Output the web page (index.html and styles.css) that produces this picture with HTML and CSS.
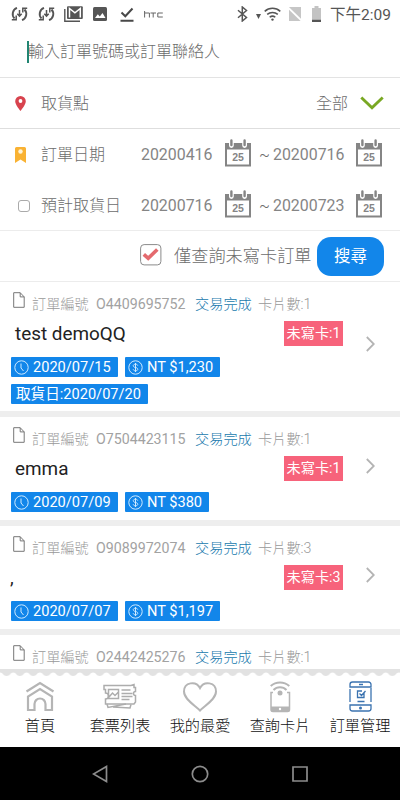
FILE: index.html
```html
<!DOCTYPE html>
<html lang="zh-Hant">
<head>
<meta charset="utf-8">
<meta name="viewport" content="width=device-width, initial-scale=1">
<title>訂單管理</title>
<link rel="stylesheet" href="styles.css">
</head>
<body>
<svg class="defs" width="0" height="0" aria-hidden="true">
  <symbol id="sync" viewBox="0 0 17 16"><g fill="none" stroke="#555" stroke-width="1.900"><path d="M6 1.800A6.600 6.600 0 0 0 3.500 12.500M11 14.200A6.600 6.600 0 0 0 13.500 3.500"/><path d="M.8 13.800h4.400V9.600M16.200 2.200h-4.400v4.200" stroke-width="1.500"/><path d="M8.500 4v6M6.300 7.800l2.200 2.400 2.200-2.400" stroke-width="1.500"/></g></symbol>
  <symbol id="calendar" viewBox="0 0 26 28"><path fill="#858585" d="M0 4h4v2.500a2.400 2.400 0 0 0 4.800 0V4h8.400v2.500a2.400 2.400 0 0 0 4.800 0V4h4v23.500H0zM2 10.500v15h22v-15z" fill-rule="evenodd"/><path d="M6.400 1.500v4.500M19.600 1.500v4.500" stroke="#858585" stroke-width="2.400" stroke-linecap="round"/></symbol>
  <symbol id="file" viewBox="0 0 12 16"><path d="M.7.7h6.500l4 4.200v10.400H.7zM7.200.7v4.200h4" fill="none" stroke="#777" stroke-width="1"/></symbol>
  <symbol id="clock" viewBox="0 0 15 15"><g fill="none" stroke="#cfeaff" stroke-width="1"><circle cx="7.500" cy="7.500" r="6.700"/><path d="M7 3.500v4.500l2.500 3"/></g></symbol>
  <symbol id="dollar" viewBox="0 0 15 15"><g fill="none" stroke="#cfeaff" stroke-width="1"><circle cx="7.500" cy="7.500" r="6.700"/><path d="M9.700 5.500C9.400 4.500 8.500 4.200 7.500 4.200c-3 0-3 3 0 3.300s3 3.300 0 3.300c-1.200 0-2-.4-2.300-1.400M7.500 3v9"/></g></symbol>
  <symbol id="chevron" viewBox="0 0 9 16"><path d="M.8 1l7 7-7 7" fill="none" stroke="#b4b4b4" stroke-width="1.800"/></symbol>
</svg>

<header class="status">
  <svg class="s-sync" width="17" height="16"><use href="#sync"/></svg>
  <svg class="s-sync2" width="17" height="16"><use href="#sync"/></svg>
  <svg class="s-mail" width="19" height="16" viewBox="0 0 19 16"><path d="M.8 3v12.200H16" fill="none" stroke="#555" stroke-width="1.400"/><rect x="3" y=".3" width="15.800" height="12.700" rx="1" fill="#555"/><path d="M5.500 11.500V2.500l5.400 4.300 5.400-4.300v9" fill="none" stroke="#fff" stroke-width="1.500"/></svg>
  <svg class="s-photo" width="14" height="14" viewBox="0 0 14 14"><rect width="14" height="14" rx="1.500" fill="#555"/><path d="M2 11l2.800-3.700 2 2.300L9.500 6l3 5z" fill="#fff"/></svg>
  <svg class="s-done" width="14" height="15" viewBox="0 0 14 15"><path d="M1.500 5.500l3.800 3.800L12.500 1.500M.5 13.700h13" fill="none" stroke="#484848" stroke-width="2"/></svg>
  <svg class="s-htc" width="19" height="7" viewBox="0 0 19 7"><path d="M.6 0v6.500M.6 2h4.800v4.500M6.500 2h5.500M9.200 2v4.500M18.800 2h-5v4h5" fill="none" stroke="#666" stroke-width="1"/></svg>
  <svg class="s-bt" width="11" height="16" viewBox="0 0 11 16"><path d="M1 4.200l8.500 7.300-4.200 3.500V1l4.200 3.500L1 11.800" fill="none" stroke="#555" stroke-width="1.500"/></svg>
  <svg class="s-tri" width="5" height="5" viewBox="0 0 5 5"><path d="M0 0h5L2.500 5z" fill="#555"/></svg>
  <svg class="s-wifi" width="17" height="14" viewBox="0 0 17 14"><path d="M.7 4.400a11.500 11.500 0 0 1 15.600 0M3.200 7.400a8 8 0 0 1 10.600 0M5.700 10.300a4.300 4.300 0 0 1 5.600 0" fill="none" stroke="#555" stroke-width="1.500"/><circle cx="8.500" cy="12.600" r="1.200" fill="#555"/></svg>
  <svg class="s-sim" width="14" height="16" viewBox="0 0 14 16"><path d="M1 1h12v14H1z" fill="#c6c6c6"/><path d="M0 1.500l13.500 13" stroke="#fff" stroke-width="1.800"/></svg>
  <svg class="s-batt" width="9" height="16" viewBox="0 0 9 16"><path d="M0 2h2.500V0h4v2H9v11H0z" fill="#c3c3c3"/><path d="M0 13.500h9V16H0z" fill="#555"/></svg>
  <span class="time">下午2:09</span>
</header>

<div class="query"><span class="caret"></span><span>輸入訂單號碼或訂單聯絡人</span></div>

<div class="row place">
  <svg class="lead" width="11" height="15" viewBox="0 0 11 15"><path d="M5.500 0A5.300 5.300 0 0 0 .2 5.300C.2 9 5.500 15 5.500 15s5.300-6 5.300-9.700A5.300 5.300 0 0 0 5.500 0z" fill="#d8434e"/><circle cx="5.500" cy="5" r="1.900" fill="#fff"/></svg>
  <span class="label">取貨點</span><span class="all">全部</span>
  <svg class="down" width="24" height="14" viewBox="0 0 24 14"><path d="M1.300 1.500L12 11.800 22.700 1.500" fill="none" stroke="#79a823" stroke-width="2.900"/></svg>
</div>

<section class="dates">
  <div class="row">
    <svg class="lead" width="11" height="16" viewBox="0 0 11 16"><path d="M1.500 0h8a1.500 1.500 0 0 1 1.500 1.500V16l-5.500-3.500L0 16V1.500A1.500 1.500 0 0 1 1.500 0z" fill="#f9b233"/><circle cx="5.500" cy="4.500" r="2.200" fill="#fff3d6"/></svg>
    <span class="label">訂單日期</span><span class="date">20200416</span><svg class="cal" width="26" height="28"><use href="#calendar"/><text x="13" y="21.700" text-anchor="middle" class="cal-day">25</text></svg><span class="tilde">~</span><span class="date-end">20200716</span><svg class="cal" width="26" height="28"><use href="#calendar"/><text x="13" y="21.700" text-anchor="middle" class="cal-day">25</text></svg>
  </div>
  <div class="row">
    <span class="lead check"></span>
    <span class="label">預計取貨日</span><span class="date">20200716</span><svg class="cal" width="26" height="28"><use href="#calendar"/><text x="13" y="21.700" text-anchor="middle" class="cal-day">25</text></svg><span class="tilde">~</span><span class="date-end">20200723</span><svg class="cal" width="26" height="28"><use href="#calendar"/><text x="13" y="21.700" text-anchor="middle" class="cal-day">25</text></svg>
  </div>
</section>

<div class="search">
  <svg width="22" height="22" viewBox="0 0 22 22"><rect x=".6" y=".6" width="20.300" height="20.300" rx="3.500" fill="#fff" stroke="#8a8a8a"/><path d="M3.800 10.300l4.400 4L17.300 5.500" fill="none" stroke="#e46a6e" stroke-width="3.600"/></svg>
  <span class="only">僅查詢未寫卡訂單</span><button class="go">搜尋</button>
</div>

<main class="orders">
  <article class="card tall">
    <div class="body">
      <div class="meta"><svg width="12" height="16"><use href="#file"/></svg><span class="k">訂單編號</span><span class="no">O4409695752</span><span class="state">交易完成</span><span class="count">卡片數:1</span></div>
      <div class="who"><span class="name">test demoQQ</span><span class="unwritten">未寫卡:1</span></div>
      <div class="tags"><span class="tag when"><svg width="15" height="15"><use href="#clock"/></svg>2020/07/15</span><span class="tag"><svg width="15" height="15"><use href="#dollar"/></svg>NT $1,230</span><span class="tag pick">取貨日:2020/07/20</span></div>
    </div>
    <svg class="more" width="9" height="16"><use href="#chevron"/></svg>
  </article>
  <article class="card">
    <div class="body">
      <div class="meta"><svg width="12" height="16"><use href="#file"/></svg><span class="k">訂單編號</span><span class="no">O7504423115</span><span class="state">交易完成</span><span class="count">卡片數:1</span></div>
      <div class="who"><span class="name">emma</span><span class="unwritten">未寫卡:1</span></div>
      <div class="tags"><span class="tag when"><svg width="15" height="15"><use href="#clock"/></svg>2020/07/09</span><span class="tag"><svg width="15" height="15"><use href="#dollar"/></svg>NT $380</span></div>
    </div>
    <svg class="more" width="9" height="16"><use href="#chevron"/></svg>
  </article>
  <article class="card">
    <div class="body">
      <div class="meta"><svg width="12" height="16"><use href="#file"/></svg><span class="k">訂單編號</span><span class="no">O9089972074</span><span class="state">交易完成</span><span class="count">卡片數:3</span></div>
      <div class="who"><span class="name comma">,</span><span class="unwritten">未寫卡:3</span></div>
      <div class="tags"><span class="tag when"><svg width="15" height="15"><use href="#clock"/></svg>2020/07/07</span><span class="tag"><svg width="15" height="15"><use href="#dollar"/></svg>NT $1,197</span></div>
    </div>
    <svg class="more" width="9" height="16"><use href="#chevron"/></svg>
  </article>
  <article class="card last">
    <div class="body">
      <div class="meta"><svg width="12" height="16"><use href="#file"/></svg><span class="k">訂單編號</span><span class="no">O2442425276</span><span class="state">交易完成</span><span class="count">卡片數:1</span></div>
    </div>
  </article>
</main>

<nav class="tabs">
  <svg class="edge" width="400" height="8"><defs><pattern id="scallop" width="13.300" height="8" patternUnits="userSpaceOnUse"><path d="M0 0h13.300v3.500C10.500 3.500 10 7 6.650 7S2.800 3.500 0 3.500z" fill="#e2e2e2"/></pattern></defs><rect width="400" height="8" fill="url(#scallop)"/></svg>
  <div class="tab"><svg width="36" height="32" viewBox="0 0 36 32"><g fill="none" stroke="#b5b5b5" stroke-width="2.200"><path d="M4.500 10.500L18 2l13.500 8.500"/><path d="M6 29V15.500L18 8l12 7.500V29h-6.500v-6a5.500 5.500 0 0 0-11 0v6z"/></g></svg><span>首頁</span></div>
  <div class="tab"><svg width="36" height="32" viewBox="0 0 36 32"><g fill="none" stroke="#adadad" stroke-width="1.500"><path d="M2 4.500h27l3-1v3h1.500v4a2 2 0 0 0 0 4V21l-1.500 2H3.500v-5a2 2 0 0 0 0-6V8.500H2z"/><path d="M5 23l1 3.500 18-3.500M11 26l17 1 1-3.500"/><path d="M6.500 8.500h10v9h-10zM7 16l3.500-4 2.500 2.500 3-3M19.500 9h9M19.500 12.500h11M19.500 15.500h11M19.500 18.500h8"/></g></svg><span>套票列表</span></div>
  <div class="tab"><svg width="36" height="32" viewBox="0 0 36 32"><path d="M18 29.500C14 25 2 18.500 2 10.500 2 1 14-.5 18 7c4-7.500 16-6 16 3.500 0 8-12 14.500-16 19z" fill="none" stroke="#b5b5b5" stroke-width="2"/></svg><span>我的最愛</span></div>
  <div class="tab"><svg width="36" height="32" viewBox="0 0 36 32"><path d="M11 11.500H9v17a2 2 0 0 0 2 2h14.500a2 2 0 0 0 2-2v-17H25" fill="none" stroke="#b5b5b5" stroke-width="1.500"/><path d="M9 25.500h18.500v5H9z" fill="#b5b5b5"/><circle cx="18" cy="28" r="1.200" fill="#fff"/><g fill="none" stroke="#b5b5b5" stroke-width="2"><path d="M8.700 5a14 14 0 0 1 18.600 0M11.500 9a9 9 0 0 1 13 0"/></g><circle cx="18" cy="12" r="2.500" fill="#b5b5b5"/></svg><span>查詢卡片</span></div>
  <div class="tab"><svg width="36" height="32" viewBox="0 0 36 32"><g fill="none" stroke="#3b73b0" stroke-width="1.300"><path d="M29 7v14M8 8v13M8 6V3.500A2.500 2.500 0 0 1 10.500 1h16A2.500 2.500 0 0 1 29 3.500V6zM8 24h21v3.500a2.500 2.500 0 0 1-2.500 2.500h-16A2.500 2.500 0 0 1 8 27.500zM17 3.500h4M22 12v4.500h-6.500V10H20M17.500 12.500l2 2 4-4.500M15.500 20.500h7"/></g><circle cx="18.500" cy="27" r="1.500" fill="#3b73b0"/></svg><span>訂單管理</span></div>
</nav>

<footer class="system">
  <svg width="16" height="18" viewBox="0 0 16 18"><path d="M14.500 1.500v15L1.500 9z"/></svg>
  <svg width="18" height="18" viewBox="0 0 18 18"><circle cx="9" cy="9" r="7.700"/></svg>
  <svg width="16" height="16" viewBox="0 0 16 16"><path d="M1 1h14v14H1z"/></svg>
</footer>
</body>
</html>
```

FILE: styles.css
```css
* { box-sizing: border-box; }
body { margin: 0; width: 400px; height: 800px; overflow: hidden; display: flex; flex-direction: column; background: #fff; color: #6c6c6c; font: 300 16px/20px Roboto, "Noto Sans CJK TC", sans-serif; white-space: nowrap; }
svg { display: block; flex: none; }
.defs { position: absolute; }
.cal-day { font: 700 10.5px "Liberation Sans", sans-serif; fill: #858585; }

.status { height: 28px; flex: none; display: flex; align-items: center; padding-left: 11px; }
.s-sync2 { margin-left: 10px; }
.s-mail { margin-left: 9px; }
.s-photo { margin-left: 10px; }
.s-done { margin-left: 13px; }
.s-htc { margin-left: 10px; }
.s-bt { margin-left: 74px; }
.s-tri { margin: 4px 0 0 8px; }
.s-wifi { margin-left: 3px; }
.s-sim { margin-left: 7px; }
.s-batt { margin-left: 10px; }
.time { margin: 1px 0 0 9px; font-size: 15.5px; font-weight: 400; color: #555; }

.query { height: 50px; flex: none; display: flex; align-items: center; padding: 0 0 1px 27px; border-bottom: 1px solid #e3e3e3; }
.caret { width: 2px; height: 22px; background: #218572; margin-right: -1px; }

.row { display: flex; align-items: center; height: 51px; padding-left: 15px; flex: none; }
.place { border-bottom: 1px solid #dedede; }
.place span { padding-top: 2px; }
.lead { width: 11px; }
.label { margin-left: 15px; width: 100px; }
.all { margin-left: 175px; }
.down { margin-left: 12px; }
.dates { height: 102px; border-bottom: 1px solid #ececec; flex: none; }
.cal { margin-top: -3px; }
.check { width: 12px; height: 12px; border: 1px solid #aaa; border-radius: 3px; margin: 0 -4px 0 3px; }
.date { width: 84px; font-weight: 400; font-size: 15.9px; color: #858585; }
.date-end { width: 83px; font-weight: 400; font-size: 15.9px; color: #858585; }
.tilde { margin-left: 8px; width: 14px; }

.search { height: 51px; flex: none; display: flex; align-items: center; padding-left: 140px; border-bottom: 1px solid #ececec; }
.search svg { margin-top: -3px; }
.only { margin-left: 12px; font-size: 17.2px; width: 143px; }
.go { width: 67px; height: 39px; padding: 0 0 2px; border: 0; border-radius: 14px; background: #1286ea; color: #fff; font: 400 16.5px/20px "Noto Sans CJK TC", sans-serif; }

.orders { flex: 1; min-height: 0; overflow: hidden; }
.card { display: flex; height: 109px; border-bottom: 6px solid #eee; align-items: center; }
.card.tall { height: 135px; }
.body { width: 343px; height: 100%; padding: 8px 0 0 11px; }
.meta { display: flex; height: 27px; align-items: center; font-size: 14.2px; color: #999; }
.meta svg { margin: -7px 0 0 2px; }
.k { margin-left: 7px; width: 64px; }
.no { width: 99px; font-weight: 400; color: #a2a2a2; }
.state { width: 63px; color: #1879ad; }
.who { display: flex; height: 33px; align-items: center; justify-content: space-between; }
.name { margin-left: 4px; font-size: 18.9px; font-weight: 400; color: #222; }
.comma { margin-left: -1px; }
.unwritten { width: 59px; height: 25px; background: #f7637b; color: #fff; font-size: 14.2px; line-height: 25px; text-align: center; font-weight: 400; }
.tags { display: flex; flex-wrap: wrap; gap: 7px; margin-top: 7px; }
.tag { display: flex; align-items: center; gap: 4px; height: 20px; line-height: 22px; padding: 0 7px 0 3px; background: #1286ea; color: #fff; font-size: 14.6px; font-weight: 400; border-radius: 1px; }
.when { width: 107px; }
.pick { padding-left: 5px; }
.more { margin: -6px 0 0 23px; }

.tabs { height: 78px; flex: none; display: grid; grid-template: 8px 70px / repeat(5, 80px); background: #fff; }
.edge { grid-column: 1 / -1; }
.tab { display: flex; flex-direction: column; align-items: center; padding-top: 4px; color: #111; font-size: 15.2px; }
.tab span { margin-top: 3px; }

.system { height: 53px; flex: none; background: #000; display: flex; justify-content: space-between; align-items: center; padding: 0 92px; }
.system svg { fill: none; stroke: #8c8c8c; stroke-width: 1.7; }
```
